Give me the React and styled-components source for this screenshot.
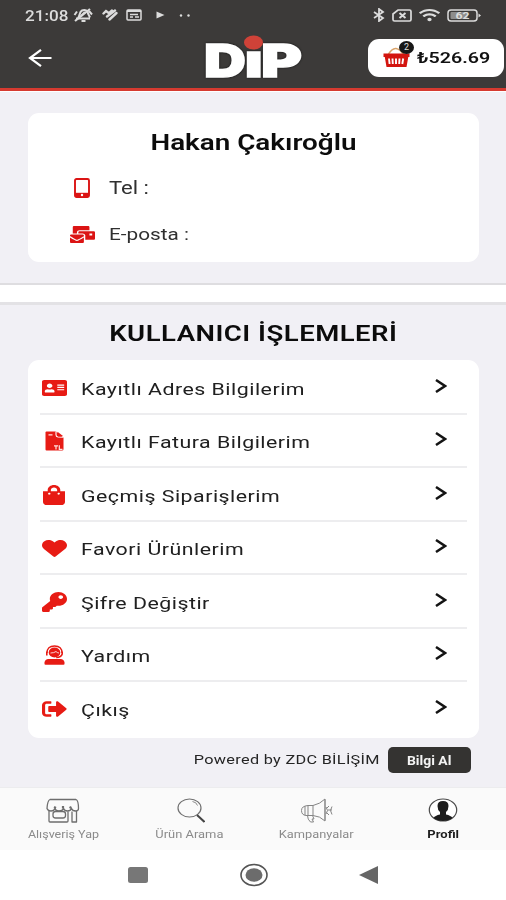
import React from "react";
import styled, { createGlobalStyle } from "styled-components";
import {
  FaAddressCard,
  FaShoppingBag,
  FaHeart,
  FaKey,
  FaSignOutAlt,
  FaMailBulk,
  FaWifi,
} from "react-icons/fa";

const Global = createGlobalStyle`
  * { box-sizing: border-box; }
  body { margin: 0; background: #fff; font-family: Roboto, "Noto Sans", sans-serif; color: #0c0c0c; }
  button { font: inherit; border: 0; padding: 0; }
  svg { display: block; flex: none; }
`;

const Screen = styled.div`
  width: 506px;
  height: 900px;
  display: flex;
  flex-direction: column;
  overflow: hidden;
`;

/* Extended lettering: regular glyphs widened horizontally */
const Wide = styled.span`
  display: inline-block;
  white-space: nowrap;
  line-height: 1.2;
  font-size: ${(p) => p.$size}px;
  font-weight: ${(p) => p.$weight || 400};
  letter-spacing: ${(p) => p.$track || 0}px;
  transform: scaleX(${(p) => p.$scale});
  transform-origin: ${(p) => p.$origin || "left"} center;
`;

const Header = styled.header`
  height: 91px;
  background: #3c3a39;
  border-bottom: 3px solid #d63a30;
  display: flex;
  flex-direction: column;
`;

const StatusBar = styled.div`
  height: 30px;
  display: flex;
  justify-content: space-between;
  align-items: center;
  padding: 0 24px 0 25px;
  color: #dcdcdc;
`;

const Clock = styled.div`
  width: 48px;
`;

const StatusGroup = styled.div`
  display: flex;
  align-items: center;
  gap: ${(p) => p.$gap}px;
`;

const AppBar = styled.div`
  flex: 1;
  display: grid;
  grid-template-columns: 204px 1fr 138px;
  align-items: center;
  padding: 0 1px 2px 0;
`;

const BackButton = styled.button`
  background: none;
  width: 26px;
  margin-left: 28px;
`;

const Logo = styled.svg`
  overflow: visible;
  text {
    font-family: Inter, sans-serif;
    font-weight: 900;
    font-size: 45px;
    fill: #fff;
    stroke: #fff;
    stroke-width: 1.4px;
    filter: drop-shadow(0 0 1px #111);
  }
`;

const CartButton = styled.button`
  width: 136px;
  height: 38px;
  margin-left: 1px;
  border-radius: 11px;
  background: #fff;
  display: flex;
  align-items: center;
  padding-left: 15px;
  color: #111;
`;

const CartIcon = styled.div`
  position: relative;
  width: 34px;
  height: 36px;
  display: flex;
  align-items: flex-end;
  padding-bottom: 8px;
`;

const CartBadge = styled.span`
  position: absolute;
  left: 16px;
  top: 1px;
  width: 15px;
  height: 13px;
  border-radius: 50%;
  background: #171717;
  color: #ddd;
  font-size: 9px;
  line-height: 13px;
  text-align: center;
`;

const Panel = styled.section`
  background: #f1f0f5;
  display: flex;
  flex-direction: column;
`;

const ProfilePanel = styled(Panel)`
  height: 194px;
  border-top: 1px solid #fff;
  padding: 21px 27px 0 28px;
  border-bottom: 2px solid #dedde0;
`;

const Gap = styled.div`
  height: 17px;
  background: #fff;
`;

const ActionsPanel = styled(Panel)`
  flex: 1;
  border-top: 3px solid #e3e2e5;
  padding: 0 27px 0 28px;
`;

const Card = styled.div`
  background: #fff;
  border-radius: 11px;
`;

const ProfileCard = styled(Card)`
  height: 149px;
  padding-top: 17px;
`;

const Name = styled.h1`
  margin: 0 0 9px;
  font-size: 22px;
  line-height: 26px;
  text-align: center;
`;

const Contact = styled.div`
  height: 46px;
  display: flex;
  align-items: center;
  padding-left: 41px;
  color: #303030;
`;

const IconSlot = styled.div`
  width: 26px;
  display: flex;
  justify-content: center;
  color: ${(p) => p.$tone || "#e71b14"};
  margin-right: 14px;
`;

const Title = styled.h2`
  margin: 0;
  height: 55px;
  padding-top: 4px;
  display: flex;
  justify-content: center;
  align-items: center;
`;

const MenuCard = styled(Card)`
  height: 378px;
  padding: 1px 12px 0;
`;

const MenuRow = styled.div`
  height: 53.5px;
  display: flex;
  align-items: center;
  padding: 2px 20px 0 1px;
  color: #202020;
  border-bottom: 2px solid #ededef;
  &:last-child { border-bottom-color: transparent; }
`;

const RowLabel = styled.div`
  flex: 1;
  padding-top: 2px;
`;

const Chevron = styled.svg`
  margin-bottom: 4px;
`;

const Powered = styled.footer`
  flex: 1;
  display: flex;
  align-items: center;
  justify-content: flex-end;
  gap: 8px;
  padding-right: 8px;
  margin-top: -6px;
  color: #252525;
`;

const InfoButton = styled.button`
  width: 83px;
  height: 26px;
  border-radius: 5px;
  background: #343331;
  color: #f4f4f4;
`;

const TabBar = styled.nav`
  height: 63px;
  background: #fafafa;
  border-top: 1px solid #ececee;
  display: grid;
  grid-template-columns: repeat(4, 1fr);
`;

const Tab = styled.div`
  display: flex;
  flex-direction: column;
  align-items: center;
  padding-top: 10px;
  gap: 6px;
  color: ${(p) => (p.$active ? "#1d1d1d" : "#8b8b8b")};
`;

const SystemNav = styled.div`
  height: 50px;
  background: #fff;
  display: flex;
  align-items: center;
  justify-content: space-between;
  padding: 0 127px;
`;

const Glyph = styled.span`
  display: flex;
  svg {
    width: ${(p) => p.$w}px;
    height: ${(p) => p.$h}px;
  }
`;

const MuteIcon = () => (
  <svg width="21" height="16" viewBox="0 0 21 16" fill="none" stroke="currentColor" strokeWidth="2">
    <path d="M3 11.500h14M5 11c2-2 1-6 4-7.500s6 0 6 3l2 4M1.500 8L4 4.500M16 4l3 3.500M8.500 14h4M8 9l4-4" />
    <path d="M2 14L17 2" strokeWidth="2.200" />
  </svg>
);

const StripesIcon = () => (
  <svg width="16" height="12" viewBox="0 0 16 12" fill="none" stroke="currentColor" strokeWidth="2.400" strokeLinecap="round">
    <path d="M1.500 4.500L4 2l3 2.200L10 1.500M5 7.500l8-6M7.500 10.500l7-6.500" />
  </svg>
);

const CardIcon = () => (
  <svg width="16" height="12" viewBox="0 0 16 12" fill="none" stroke="currentColor" strokeWidth="1.500">
    <rect x="1" y="1" width="14" height="10" rx="1" />
    <path d="M1 2h14" strokeWidth="2" />
    <path d="M4 5.500h8M4 8h3M9 8h4" />
  </svg>
);

const PlayIcon = () => (
  <svg width="9" height="8" viewBox="0 0 9 8" fill="currentColor">
    <path d="M.5.5L8.500 4 .5 7.500z" />
  </svg>
);

const DotsIcon = () => (
  <svg width="12" height="3" viewBox="0 0 12 3" fill="currentColor">
    <circle cx="2" cy="1.500" r="1.200" />
    <circle cx="9.500" cy="1.500" r="1.200" />
  </svg>
);

const BluetoothIcon = () => (
  <svg width="12" height="14" viewBox="0 0 12 14" fill="none" stroke="currentColor" strokeWidth="1.800">
    <path d="M1 4l9 6-4 3V1l4 3-9 6" />
  </svg>
);

const SimIcon = () => (
  <svg width="20" height="13" viewBox="0 0 20 13" fill="none" stroke="currentColor" strokeWidth="1.700">
    <path d="M6 1h11.500q1.500 0 1.500 1.500v8q0 1.500-1.500 1.500h-15Q1 12 1 10.500V5z" />
    <path d="M7.500 4l6 5M13.500 4l-6 5" strokeWidth="2" />
  </svg>
);

const BatteryIcon = () => (
  <svg width="35" height="13" viewBox="0 0 35 13">
    <rect x="1" y="1" width="29" height="11" rx="3" fill="none" stroke="currentColor" strokeWidth="1.500" />
    <rect x="3.500" y="3" width="17" height="7" rx="1" fill="#8d8c8b" />
    <path d="M31.500 4.500l2.500 2-2.500 2z" fill="currentColor" />
    <text x="8.500" y="10" fontSize="9.500" fontWeight="700" fill="currentColor" textLength="14" lengthAdjust="spacingAndGlyphs">62</text>
  </svg>
);

const BackIcon = () => (
  <svg width="26" height="20" viewBox="0 0 26 20" fill="none" stroke="#fff" strokeWidth="2.200">
    <path d="M23.500 10H2M13 1.800L2 10l11 8.200" />
  </svg>
);

const BasketIcon = () => (
  <svg width="27" height="21" viewBox="0 0 27 21">
    <path d="M5 8Q9 1 13 1.500T21 8" fill="none" stroke="#d9a36a" strokeWidth="1.500" />
    <path d="M.5 6.500h26v3.500h-1.200L23.500 20h-20L1.800 10H.5z" fill="#d3150f" />
    <path d="M6 11.500l.6 5.500M9.500 11.500l.3 5.500M13 11.500V17M16.500 11.500l-.3 5.500M20.200 11.500l-.9 5.500" stroke="#fff" strokeWidth="1.900" />
  </svg>
);

const PhoneIcon = () => (
  <svg width="16" height="20" viewBox="0 0 16 20">
    <rect x="1" y="1" width="14" height="18" rx="1.500" fill="none" stroke="currentColor" strokeWidth="1.900" />
    <path d="M1 14.800h14V19H1z" fill="currentColor" />
    <circle cx="8" cy="17" r="1.200" fill="#fff" />
  </svg>
);

const InvoiceIcon = () => (
  <svg width="19" height="20" viewBox="0 0 19 20">
    <path d="M1.500.5h9.500l7.500 6V18q0 1.500-1.500 1.500H1.500q-1 0-1-1v-17q0-1 1-1z" fill="currentColor" />
    <path d="M12.500.8l5.500 4.200q-5 .5-5.500-1.700z" fill="currentColor" />
    <path d="M11 .5v3.200q0 2 2 2.300l5.500.3" fill="none" stroke="#fff" strokeWidth="1.100" />
    <path d="M3.500 3.800H7.500M9 14.800h4M11 14.800v3.700M14.300 14.300v4H17.500" fill="none" stroke="#ffe4e0" strokeWidth="1.200" />
  </svg>
);

const SupportIcon = () => (
  <svg width="21" height="20" viewBox="0 0 21 20">
    <path d="M3 8Q3 1 10.500 1T18 8" fill="none" stroke="currentColor" strokeWidth="1.300" />
    <ellipse cx="10.500" cy="7.500" rx="5.800" ry="5" fill="currentColor" />
    <path d="M6.500 8Q10 8 12 6.500q1 1.300 3 1.500" fill="none" stroke="#fff" strokeWidth=".8" />
    <path d="M2.800 6.500v4M18.200 6.500v2.500q-1 3.500-6 3.500" fill="none" stroke="currentColor" strokeWidth="1.600" />
    <path d="M.5 19v-1.500Q1 14 4.500 14h12q3.500 0 4 3.500V19q0 .7-1 .7h-18q-1 0-1-.7z" fill="currentColor" />
  </svg>
);

const ChevronIcon = () => (
  <Chevron width="12" height="14" viewBox="0 0 12 14" fill="none" stroke="#141414" strokeWidth="2.500">
    <path d="M1 1l9 6-9 6" />
  </Chevron>
);

const StoreIcon = () => (
  <svg width="34" height="25" viewBox="0 0 34 25" fill="none" stroke="#6e6e6e" strokeWidth="1.300" strokeLinejoin="round">
    <path d="M4 1.500h26q2.500 1 2.500 9q0 2.500-3 2.500t-4-2.500q-1 2.500-4 2.500t-4-2.500q-1 2.500-4.500 2.500t-4-2.500q-1 2.500-4 2.500T1 10.500Q1.500 2.500 4 1.500z" />
    <path d="M9.500 8.500l-1 2M17 8v2.500M24 8.500l1 2" strokeWidth="2.200" />
    <path d="M3 13v10q0 1 1 1h17q1 0 1-1V13.500M26 13.500V24h4.500V13" />
    <rect x="7" y="13.500" width="12.500" height="6.500" rx="2.500" />
  </svg>
);

const SearchIcon = () => (
  <svg width="30" height="25" viewBox="-1.500 0 30 25" fill="none" stroke="#707070" strokeWidth="1.200">
    <ellipse cx="13" cy="10" rx="11.500" ry="9" />
    <path d="M16 3.500q4 .6 5 4" strokeWidth=".8" />
    <path d="M20.500 17l7.500 7" stroke="#444" strokeWidth="2" />
  </svg>
);

const MegaphoneIcon = () => (
  <svg width="33" height="25" viewBox="0 0 33 25" fill="none" stroke="#858585" strokeWidth="1">
    <path d="M8 7.500h5Q20 6 25 1v22q-5-5-12-5.500H6Q1.500 17 1.500 12.500T8 7.500zM13 7.500v10M8 7.500v10M5 8v9" />
    <path d="M7.500 17.500q0 4 3 6.500h3l-1.500-3h2l-1.500-3.500M25 1.500v21" />
    <path d="M26 9q3 3.500 0 7M29 8l-2 2M32 8.500q-3 4 0 8M28 12h4M29 17l-2-2" />
  </svg>
);

const UserIcon = () => (
  <svg width="30" height="25" viewBox="0 0 30 25">
    <ellipse cx="15" cy="12" rx="13.700" ry="11" fill="#fff" stroke="#4b4b4b" strokeWidth="1.200" />
    <path d="M9.500 8q0-5 5.500-5t5.500 5q0 4-2.500 6v2.500q5 1 6.500 3.500-4 3-9.500 3t-9.500-3Q7 17.500 12 16.500V14Q9.500 12 9.500 8z" fill="#1c1c1c" />
  </svg>
);

const menu = [
  { label: "Kayıtlı Adres Bilgilerim", Icon: FaAddressCard, box: "0 32 576 448", w: 25, h: 16 },
  { label: "Kayıtlı Fatura Bilgilerim", Icon: InvoiceIcon, w: 19, h: 20 },
  { label: "Geçmiş Siparişlerim", Icon: FaShoppingBag, box: "0 0 448 512", w: 22, h: 20 },
  { label: "Favori Ürünlerim", Icon: FaHeart, box: "0 32 512 450", w: 25, h: 17 },
  { label: "Şifre Değiştir", Icon: FaKey, box: "0 0 512 512", w: 25, h: 20 },
  { label: "Yardım", Icon: SupportIcon, w: 21, h: 20 },
  { label: "Çıkış", Icon: FaSignOutAlt, box: "0 60 512 392", w: 25, h: 16 },
];

const tabs = [
  { label: "Alışveriş Yap", Icon: StoreIcon, scale: 1.25 },
  { label: "Ürün Arama", Icon: SearchIcon, scale: 1.29 },
  { label: "Kampanyalar", Icon: MegaphoneIcon, scale: 1.28 },
  { label: "Profil", Icon: UserIcon, scale: 1.3, active: true },
];

export default function App() {
  return (
    <Screen>
      <Global />
      <Header>
        <StatusBar>
          <StatusGroup $gap={0}>
            <Clock><Wide $size={14} $weight={500} $scale={1.22}>21:08</Wide></Clock>
            <StatusGroup $gap={8}>
              <MuteIcon />
              <StripesIcon />
              <CardIcon />
            </StatusGroup>
            <StatusGroup $gap={14}>
              <span />
              <PlayIcon />
              <DotsIcon />
            </StatusGroup>
          </StatusGroup>
          <StatusGroup $gap={7}>
            <BluetoothIcon />
            <SimIcon />
            <Glyph $w={21} $h={14}><FaWifi preserveAspectRatio="none" /></Glyph>
            <BatteryIcon />
          </StatusGroup>
        </StatusBar>
        <AppBar>
          <BackButton aria-label="Geri"><BackIcon /></BackButton>
          <Logo width="98" height="46" viewBox="0 0 98 46">
            <text x="0" y="42" textLength="42" lengthAdjust="spacingAndGlyphs">D</text>
            <text x="40.800" y="42" textLength="18" lengthAdjust="spacingAndGlyphs">ı</text>
            <text x="57" y="42" textLength="41" lengthAdjust="spacingAndGlyphs">P</text>
            <ellipse cx="49.500" cy="7.500" rx="9.500" ry="7" fill="#cf4238" />
          </Logo>
          <CartButton>
            <CartIcon>
              <BasketIcon />
              <CartBadge>2</CartBadge>
            </CartIcon>
            <Wide $size={15} $weight={600} $scale={1.31}>₺526.69</Wide>
          </CartButton>
        </AppBar>
      </Header>

      <ProfilePanel>
        <ProfileCard>
          <Name><Wide $size={22} $weight={600} $scale={1.265} $origin="center">Hakan Çakıroğlu</Wide></Name>
          <Contact>
            <IconSlot $tone="#db1414"><PhoneIcon /></IconSlot>
            <Wide $size={17.5} $scale={1.26}>Tel :</Wide>
          </Contact>
          <Contact>
            <IconSlot $tone="#db1414"><Glyph $w={25} $h={17}><FaMailBulk preserveAspectRatio="none" /></Glyph></IconSlot>
            <Wide $size={17} $scale={1.22}>E-posta :</Wide>
          </Contact>
        </ProfileCard>
      </ProfilePanel>
      <Gap />
      <ActionsPanel>
        <Title><Wide $size={22} $weight={600} $track={0.4} $scale={1.25} $origin="center">KULLANICI İŞLEMLERİ</Wide></Title>
        <MenuCard>
          {menu.map(({ label, Icon, box, w, h }) => (
            <MenuRow key={label}>
              <IconSlot>
                <Glyph $w={w} $h={h}>
                  <Icon viewBox={box} preserveAspectRatio="none" />
                </Glyph>
              </IconSlot>
              <RowLabel><Wide $size={17} $track={0.4} $scale={1.255}>{label}</Wide></RowLabel>
              <ChevronIcon />
            </MenuRow>
          ))}
        </MenuCard>
        <Powered>
          <Wide $size={13} $track={0.25} $scale={1.25} $origin="right">Powered by ZDC BİLİŞİM</Wide>
          <InfoButton><Wide $size={12} $weight={700} $scale={1.16} $origin="center">Bilgi Al</Wide></InfoButton>
        </Powered>
      </ActionsPanel>

      <TabBar>
        {tabs.map(({ label, Icon, scale, active }) => (
          <Tab key={label} $active={active}>
            <Icon />
            <Wide $size={10} $weight={active ? 700 : 400} $scale={scale} $origin="center">{label}</Wide>
          </Tab>
        ))}
      </TabBar>
      <SystemNav>
        <svg width="22" height="18"><rect x="1" y="1" width="20" height="16" rx="2.500" fill="#777" /></svg>
        <svg width="30" height="24" viewBox="0 0 30 24">
          <ellipse cx="15" cy="12" rx="13" ry="10.500" fill="none" stroke="#555" strokeWidth="1.600" />
          <ellipse cx="15" cy="12" rx="8.500" ry="6.800" fill="#6c6c6c" />
        </svg>
        <svg width="20" height="20"><path d="M0 10L19 1v18z" fill="#666" /></svg>
      </SystemNav>
    </Screen>
  );
}
